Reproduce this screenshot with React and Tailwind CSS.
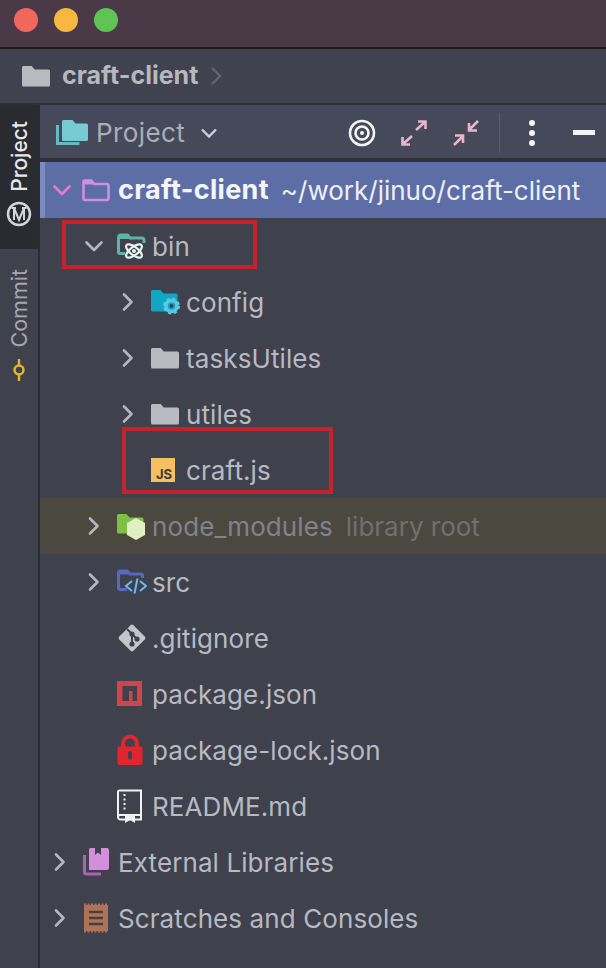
const Chev = ({ open, color = "#b4b6c0" }) => (
  <svg width="20" height="20" viewBox="0 0 20 20" fill="none" stroke={color} strokeWidth="2.6" strokeLinecap="round" strokeLinejoin="round">
    {open ? <path d="M2.5 6.5 10 14l7.5-7.5" /> : <path d="M6 2.5 13.5 10 6 17.5" />}
  </svg>
);

const FolderSolid = ({ color = "#b9babf" }) => (
  <svg width="28" height="22" viewBox="0 0 28 22"><path d="M0 2.5A1.5 1.5 0 0 1 1.5 1h8.2l3 3.5h13.8A1.5 1.5 0 0 1 28 6v14a1.5 1.5 0 0 1-1.5 1.5h-25A1.5 1.5 0 0 1 0 20z" fill={color} /></svg>
);

const BinIcon = () => (
  <svg width="30" height="28" viewBox="0 0 30 28" fill="none">
    <path d="M1.500 5V20a1.500 1.500 0 0 0 1.500 1.500H8M1.500 5a2 2 0 0 1 2-2h7l2.500 3H25a2 2 0 0 1 2 2v3" stroke="#5fb3a7" strokeWidth="3" />
    <path d="M2 3.500h9l2 3.500H2z" fill="#5fb3a7" />
    <g stroke="#e6f3ef" strokeWidth="2.200"><ellipse cx="17" cy="19" rx="9.500" ry="4" transform="rotate(38 17 19)" /><ellipse cx="17" cy="19" rx="9.500" ry="4" transform="rotate(-38 17 19)" /></g>
    <circle cx="17" cy="19" r="2" fill="#e6f3ef" />
  </svg>
);

const ConfigIcon = () => (
  <svg width="30" height="26" viewBox="0 0 30 26">
    <path d="M0 2.5A1.5 1.5 0 0 1 1.5 1h8l3 3.5H25A1.5 1.5 0 0 1 26.500 6v15a1.500 1.500 0 0 1-1.500 1.500H1.500A1.500 1.500 0 0 1 0 21z" fill="#12a5c4" />
    <circle cx="20.500" cy="17" r="6.500" fill="none" stroke="#56c8e2" strokeWidth="4" strokeDasharray="2.800 2.300" />
    <circle cx="20.500" cy="17" r="5.500" fill="none" stroke="#56c8e2" strokeWidth="3.500" />
    <circle cx="20.500" cy="17" r="2" fill="#3f414d" />
  </svg>
);

const NodeIcon = () => (
  <svg width="30" height="28" viewBox="0 0 30 28">
    <path d="M0 3.500A1.500 1.500 0 0 1 1.500 2h8l3 3.500H25A1.500 1.500 0 0 1 26.500 7v13a1.500 1.500 0 0 1-1.500 1.500H1.500A1.500 1.500 0 0 1 0 20z" fill="#80bf47" />
    <path d="M19 6l9 5v12l-9 5-9-5V11z" fill="#e0efc4" />
  </svg>
);

const SrcIcon = () => (
  <svg width="30" height="28" viewBox="0 0 30 28" fill="none">
    <path d="M1.500 4.500V20a1.500 1.500 0 0 0 1.500 1.500h7M1.500 4.500a1.500 1.500 0 0 1 1.500-1.500h7l3 3h11a1.500 1.500 0 0 1 1.500 1.500v2.500" stroke="#5869bd" strokeWidth="3" />
    <path d="M1.500 3h9l2 3.500h-11z" fill="#5869bd" />
    <path d="M15 13l-6 5 6 5M23 13l6 5-6 5" stroke="#6db9ef" strokeWidth="2" />
    <path d="M20.500 10.500 17.500 25.500" stroke="#6db9ef" strokeWidth="2" />
  </svg>
);

const GitIcon = () => (
  <svg width="30" height="30" viewBox="0 0 30 30">
    <rect x="5" y="5" width="20" height="20" rx="2" transform="rotate(45 15 15)" fill="#c4c5ca" />
    <g stroke="#3f414d" strokeWidth="2" fill="#3f414d"><path d="M10 6l5 5v10M15 11l5 5" fill="none" /><circle cx="15" cy="11" r="1.600" /><circle cx="15" cy="21" r="1.600" /><circle cx="20" cy="16" r="1.600" /></g>
  </svg>
);

const NpmIcon = () => (
  <svg width="26" height="26" viewBox="0 0 26 26"><path fillRule="evenodd" d="M0 0h25v25H0zM5.500 5v15h6.500V10h3.500v10h4.500V5z" fill="#d2434a" /></svg>
);

const LockIcon = () => (
  <svg width="26" height="32" viewBox="0 0 26 32">
    <path d="M6 13V9.500a7 7 0 0 1 14 0V13" fill="none" stroke="#e0252f" strokeWidth="4" />
    <path d="M2 12.500h22a1.500 1.500 0 0 1 1.500 1.500v15a2 2 0 0 1-2 2h-21a2 2 0 0 1-2-2V14A1.500 1.500 0 0 1 2 12.500z" fill="#e0252f" />
    <rect x="11" y="17" width="4" height="8.500" rx="2" fill="#3f414d" />
  </svg>
);

const BookIcon = () => (
  <svg width="26" height="34" viewBox="0 0 26 34" fill="none">
    <path d="M3 1.500h21v24.500H3a2 2 0 0 0-2 2v-25a1.500 1.500 0 0 1 2-1.500zM1 28a2.500 2.500 0 0 0 2.500 2.500H24V26" stroke="#f2f2f4" strokeWidth="2" />
    <path d="M7.500 5v16" stroke="#f2f2f4" strokeWidth="2" strokeDasharray="2 2.500" />
    <path d="M8 27h10v7l-5-3-5 3z" fill="#f2f2f4" />
  </svg>
);

const LibIcon = () => (
  <svg width="26" height="32" viewBox="0 0 26 32" fill="none">
    <path d="M8 2h4v7l3-2.500L18 9V2h6a2 2 0 0 1 2 2v18a2 2 0 0 1-2 2H6V4a2 2 0 0 1 2-2z" fill="#d58edb" />
    <path d="M1.500 9v17a2 2 0 0 0 2 2H18" stroke="#a964b4" strokeWidth="3" />
  </svg>
);

const ScratchIcon = () => (
  <svg width="26" height="30" viewBox="0 0 26 30">
    <rect x="1" y="2" width="24" height="26" fill="#af7258" />
    <path d="M1 1.500h24M1 28.500h24" stroke="#af7258" strokeWidth="2" strokeDasharray="2 1.500" />
    <path d="M6 9h14M6 15h14M6 21h14" stroke="#46403f" strokeWidth="2.600" />
  </svg>
);

const JsIcon = () => (
  <div className="w-6 h-6 bg-[#f5c062] flex items-end justify-end pr-[3px] text-[13px] leading-[16px] font-bold text-[#3f3a33]">JS</div>
);

const Row = ({ depth, arrow, icon, label, extra, className = "", labelClass = "text-[#b8bac3]" }) => (
  <div className={`h-14 flex items-center shrink-0 ${className}`}>
    <div className="w-[34px] shrink-0 flex justify-center" style={{ marginLeft: depth * 34 + 3 }}>
      {arrow ? <Chev open={arrow === "open"} /> : null}
    </div>
    <div className="w-[41px] shrink-0 pl-[6px] flex items-center justify-start">{icon}</div>
    <span className={`text-[26px] tracking-[0.1px] whitespace-nowrap ${labelClass}`}>{label}</span>
    {extra}
  </div>
);

export default function App() {
  return (
    <div className="relative w-[606px] h-[968px] overflow-hidden bg-[#3f414d] flex flex-col font-['Inter','Noto_Sans',sans-serif]">
      <div className="h-[49px] shrink-0 bg-[#4a3a48] border-b-2 border-[#1c1a20] flex items-center gap-4 pl-[14px] pb-[8px]">
        <div className="w-6 h-6 rounded-full bg-[#f0675c]" />
        <div className="w-6 h-6 rounded-full bg-[#f6b840]" />
        <div className="w-6 h-6 rounded-full bg-[#5fc454]" />
      </div>

      <div className="h-[56px] shrink-0 bg-[#40424f] border-b-2 border-[#2f3039] flex items-center pl-[22px]">
        <FolderSolid />
        <span className="ml-[12px] text-[25px] font-bold text-[#b7b8bf]">craft-client</span>
        <svg className="ml-[12px]" width="12" height="20" viewBox="0 0 12 20" fill="none" stroke="#62646e" strokeWidth="2.400"><path d="M2 2l8 8-8 8" /></svg>
      </div>

      <div className="flex-1 flex min-h-0">
        <div className="w-10 shrink-0 bg-[#3f414d] border-r-2 border-[#2b2c33] flex flex-col">
          <div className="h-[144px] bg-[#2a2b31] flex flex-col items-center pt-[16px] gap-[9px]">
            <span className="[writing-mode:vertical-rl] rotate-180 text-[21px] leading-[21px] font-medium text-[#e8e8ec]">Project</span>
            <svg width="26" height="26" viewBox="0 0 26 26" fill="none" stroke="#d5d5da" strokeWidth="2">
              <circle cx="13" cy="13" r="11" strokeWidth="2.500" />
              <path d="M8 7v12M8 7l5 12 5-12v12M5.500 7H10M16 7h4.500" />
            </svg>
          </div>
          <div className="flex flex-col items-center pt-[20px] gap-[11px]">
            <span className="[writing-mode:vertical-rl] rotate-180 text-[21.500px] leading-[21px] text-[#a5a7b0]">Commit</span>
            <svg width="14" height="22" viewBox="0 0 14 22" fill="none" stroke="#e6b530" strokeWidth="2.400"><circle cx="7" cy="11" r="4.500" /><path d="M7 0v6M7 16v6" /></svg>
          </div>
        </div>

        <div className="flex-1 min-w-0 flex flex-col">
          <div className="h-[57px] shrink-0 bg-[#464959] border-b-[4px] border-[#2f3039] flex items-center pl-[16px] pr-[11px] pt-[2px]">
            <svg width="32" height="28" viewBox="0 0 32 28" fill="none">
              <path d="M1.500 6v18.500h22" stroke="#6bb9c0" strokeWidth="3" />
              <path d="M6 2.500A1.500 1.500 0 0 1 7.500 1h9l3 3.500H30.500A1.500 1.500 0 0 1 32 6v14.500A1.500 1.500 0 0 1 30.500 22h-23A1.500 1.500 0 0 1 6 20.500z" fill="#79cbd3" />
            </svg>
            <span className="ml-[8px] text-[26px] tracking-[0.4px] text-[#abadb8]">Project</span>
            <svg className="ml-[16px]" width="16" height="10" viewBox="0 0 16 10" fill="none" stroke="#cfd0d6" strokeWidth="2.400"><path d="M1 1.500l7 7 7-7" /></svg>
            <div className="flex-1" />
            <svg width="28" height="28" viewBox="0 0 28 28" fill="none" stroke="#f4f4f6" strokeWidth="2.600"><circle cx="14" cy="14" r="12" /><circle cx="14" cy="14" r="6.500" /><circle cx="14" cy="14" r="2" fill="#f4f4f6" stroke="none" /></svg>
            <svg className="ml-[25px]" width="26" height="26" viewBox="0 0 26 26" fill="none" stroke="#e8b5cb" strokeWidth="2.600"><path d="M15 10l9-8M17 1.500h7.500V9M11 16l-9 8M9 24.500H1.500V17" /></svg>
            <svg className="ml-[26px]" width="26" height="26" viewBox="0 0 26 26" fill="none" stroke="#e8b5cb" strokeWidth="2.600"><path d="M25 1l-9 9M16 3v7.500h8M1 25l9-9M10 23v-7.500H2" /></svg>
            <div className="ml-[20px] w-[1px] h-10 bg-[#5b5e6c]" />
            <div className="ml-[29px] flex flex-col gap-[4px]">
              <div className="w-[6px] h-[6px] rounded-full bg-[#f4f4f6]" />
              <div className="w-[6px] h-[6px] rounded-full bg-[#f4f4f6]" />
              <div className="w-[6px] h-[6px] rounded-full bg-[#f4f4f6]" />
            </div>
            <div className="ml-[38px] w-[22px] h-[5px] bg-[#f4f4f6]" />
          </div>

          <div className="flex-1 flex flex-col min-h-0">
            <div className="h-[56px] shrink-0 bg-[#5d6ea6] border-l-[5px] border-[#7b8ac0] flex items-center">
              <div className="w-[34px] shrink-0 flex justify-center"><Chev open color="#e77cc9" /></div>
              <svg className="ml-[3px] shrink-0" width="28" height="24" viewBox="0 0 28 24" fill="none">
                <path d="M1.500 4.500v16a1.500 1.500 0 0 0 1.500 1.500h22a1.500 1.500 0 0 0 1.500-1.500V7.500A1.500 1.500 0 0 0 25 6H12L9.500 2.500H3a1.500 1.500 0 0 0-1.500 2z" stroke="#d08fde" strokeWidth="2.600" />
                <path d="M1 3h9l2.500 3.500H1z" fill="#d08fde" />
              </svg>
              <span className="ml-[8px] text-[27px] tracking-[0.3px] font-bold text-[#f4f5f9] whitespace-nowrap">craft-client</span>
              <span className="ml-[12px] text-[26px] text-[#eef0f6] whitespace-nowrap">~/work/jinuo/craft-client</span>
            </div>
            <Row depth={1} arrow="open" icon={<BinIcon />} label="bin" />
            <Row depth={2} arrow="closed" icon={<ConfigIcon />} label="config" />
            <Row depth={2} arrow="closed" icon={<FolderSolid />} label="tasksUtiles" />
            <Row depth={2} arrow="closed" icon={<FolderSolid />} label="utiles" />
            <Row depth={2} icon={<JsIcon />} label="craft.js" />
            <Row
              depth={1}
              arrow="closed"
              icon={<NodeIcon />}
              label="node_modules"
              labelClass="text-[#80828e]"
              className="bg-[#4b4840]"
              extra={<span className="ml-[13px] text-[26px] text-[#6f706f] whitespace-nowrap">library root</span>}
            />
            <Row depth={1} arrow="closed" icon={<SrcIcon />} label="src" />
            <Row depth={1} icon={<GitIcon />} label=".gitignore" />
            <Row depth={1} icon={<NpmIcon />} label="package.json" />
            <Row depth={1} icon={<LockIcon />} label="package-lock.json" />
            <Row depth={1} icon={<BookIcon />} label="README.md" />
            <Row depth={0} arrow="closed" icon={<LibIcon />} label="External Libraries" />
            <Row depth={0} arrow="closed" icon={<ScratchIcon />} label="Scratches and Consoles" />
          </div>
        </div>
      </div>

      <div className="absolute left-[62px] top-[220px] w-[195px] h-[49px] border-[4px] border-[#c6222b]" />
      <div className="absolute left-[122px] top-[427px] w-[211px] h-[67px] border-[4px] border-[#c6222b]" />
    </div>
  );
}
